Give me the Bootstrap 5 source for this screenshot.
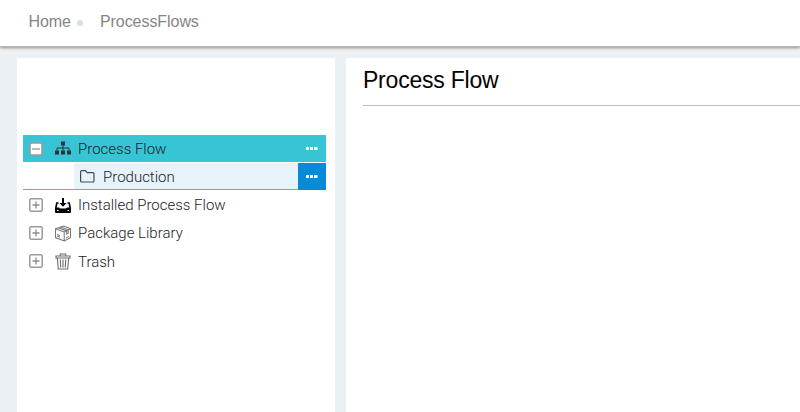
<!DOCTYPE html>
<html lang="en">
<head>
<meta charset="utf-8">
<meta name="viewport" content="width=device-width, initial-scale=1">
<title>ProcessFlows</title>
<link href="https://cdn.jsdelivr.net/npm/bootstrap@5.3.0/dist/css/bootstrap.min.css" rel="stylesheet">
<style>
body { background: #ebf0f4; font-family: "Liberation Sans", Arial, sans-serif; color: #000; }
.topbar { height: 47px; padding: 0 0 2px 28.500px; background: #fff; border-bottom: 1px solid #b4b8bb; box-shadow: 0 1px 3px rgba(0,0,0,.4), 0 7px 0 #f0f1f2; font-size: 16px; letter-spacing: -.06px; color: #858585; }
.crumb-dot { width: 6px; height: 6px; background: #dcdddf; margin: 1px 17px 0 6px; }
.workspace { height: 365px; padding: 11px 0 0 17px; gap: 11px; }
.side { width: 318px; padding: 77px 9px 0 6px; }
.main-pane { padding: 8px 0 0 17px; }
.title { font-size: 23px; line-height: 28px; letter-spacing: -.22px; padding-bottom: 11px; border-bottom: 1px solid #bfbfbf; }
.tree { font-family: Roboto, "Open Sans", sans-serif; font-size: 15px; font-weight: 300; color: #1d2225; }
.tree-row { height: 28px; padding-left: 6px; }
.tree-row svg { flex: none; }
.toggle { width: 14px; height: 14px; margin-right: 11px; }
.kind { width: 18px; height: 18px; margin-right: 6px; }
.tree-row.active { height: 27px; background: #37c5d5; margin-bottom: 1px; }
.tree-row.child-row { height: 27px; padding-left: 51px; border-bottom: 1px solid #37c5d5; margin-bottom: 1px; }
.child-name { background: #e6f3fa; padding: 1px 0 0 5px; }
.more { width: 28px; height: 27px; }
.child-row .more { background: #078bd8; margin-bottom: -1px; }
.caption { line-height: 20px; white-space: nowrap; }
.last-row .caption { padding-top: 1px; }
</style>
<script src="https://cdn.jsdelivr.net/npm/bootstrap@5.3.0/dist/js/bootstrap.bundle.min.js"></script>
</head>
<body class="overflow-hidden">
<svg class="d-none">
  <symbol id="plus" viewBox="0 0 14 14"><rect x=".8" y=".8" width="12.400" height="12.400" rx="1.5" fill="#fff" stroke="#9b9b9b" stroke-width="1.5"/><path d="M3.500 7h7M7 3.500v7" stroke="#8d8d8d" stroke-width="1.300"/></symbol>
  <symbol id="minus" viewBox="0 0 14 14"><rect x="1" y="1" width="12" height="12" rx="1.5" fill="#fff" stroke="#9b9b9b" stroke-width="1.6"/><path d="M3 7h8" stroke="#8d8d8d" stroke-width="1.2"/></symbol>
  <symbol id="dots" viewBox="0 0 12 3"><path d="M0 0h3v3H0zM4 0h3v3H4zM8 0h3v3H8z" fill="#fff"/><path d="M11 0h1v3h-1z" fill="#fff" opacity=".5"/></symbol>
</svg>
<header class="topbar d-flex align-items-center position-relative">
  <span>Home</span><span class="crumb-dot rounded-circle"></span><span>ProcessFlows</span>
</header>
<div class="workspace d-flex position-relative">
  <aside class="side bg-white flex-shrink-0">
    <div class="tree">
      <div class="tree-row active d-flex align-items-center">
        <svg class="toggle"><use href="#minus"/></svg>
        <svg class="kind" viewBox="0 0 18 18"><path d="M7 1.500h4v4H7zM1 10.500h4v4H1zM7 10.500h4v4H7zM13 10.500h4v4h-4z" fill="#2b3134"/><path d="M9 5.500v5M3 10.500V8h12v2.500" fill="none" stroke="#2b3134" stroke-width="1"/></svg>
        <span class="caption">Process Flow</span>
        <span class="more ms-auto d-flex align-items-center justify-content-center"><svg width="12" height="3"><use href="#dots"/></svg></span>
      </div>
      <div class="tree-row child-row d-flex">
        <div class="child-name flex-grow-1 d-flex align-items-center">
          <svg class="kind" viewBox="0 0 18 18"><path d="M1.600 13V4q0-1.300 1.300-1.300h3.500l1.800 2h5.500q1.300 0 1.300 1.300v6.700q0 1.300-1.300 1.300H2.900Q1.600 14 1.600 13z" fill="none" stroke="#444b4e" stroke-width="1.200"/></svg>
          <span class="caption">Production</span>
        </div>
        <span class="more d-flex align-items-center justify-content-center"><svg width="12" height="3"><use href="#dots"/></svg></span>
      </div>
      <div class="tree-row d-flex align-items-center">
        <svg class="toggle"><use href="#plus"/></svg>
        <svg class="kind" viewBox="0 0 18 18"><path d="M8 2h2v5h2.600L9 10.700 5.400 7H8z"/><path d="M4.500 7H2.800L1.800 12M13.500 7h1.700l1 5" fill="none" stroke="#000" stroke-width="1.600"/><path d="M1 11.500h4l1 1h6l1-1h4V16q0 1-1 1H2q-1 0-1-1z"/><path d="M3 14.500h1.500M13.500 14.500H15" stroke="#fff"/></svg>
        <span class="caption">Installed Process Flow</span>
      </div>
      <div class="tree-row d-flex align-items-center">
        <svg class="toggle"><use href="#plus"/></svg>
        <svg class="kind" viewBox="0 0 18 18"><path d="M1.500 4.700L9.500 2l7 2.700v9l-6.300 3.300-8.700-3.400zM1.500 4.700l8.700 3.200 6.300-3.200M10.200 7.900V17M4.400 3.700l8.300 3.200v3l1.500-.800V5.800L6.600 2.900" fill="none" stroke="#777" stroke-width="1.050"/><path d="M3 10.500l3 1.200M3 12l3 1.200M12 14l3-1.500" stroke="#777"/></svg>
        <span class="caption">Package Library</span>
      </div>
      <div class="tree-row last-row d-flex align-items-center">
        <svg class="toggle"><use href="#plus"/></svg>
        <svg class="kind" viewBox="0 0 18 18"><path d="M6.200 4V2h5.600v2M2 4h14v2H2zM3.300 6l1 11h9.400l1-11M6.300 7.500l.4 8M9 7.500v8M11.700 7.500l-.4 8" fill="none" stroke="#6d6d6d" stroke-width="1.100"/></svg>
        <span class="caption">Trash</span>
      </div>
    </div>
  </aside>
  <main class="main-pane bg-white flex-grow-1">
    <h1 class="title mb-0 fw-normal">Process Flow</h1>
  </main>
</div>
</body>
</html>
